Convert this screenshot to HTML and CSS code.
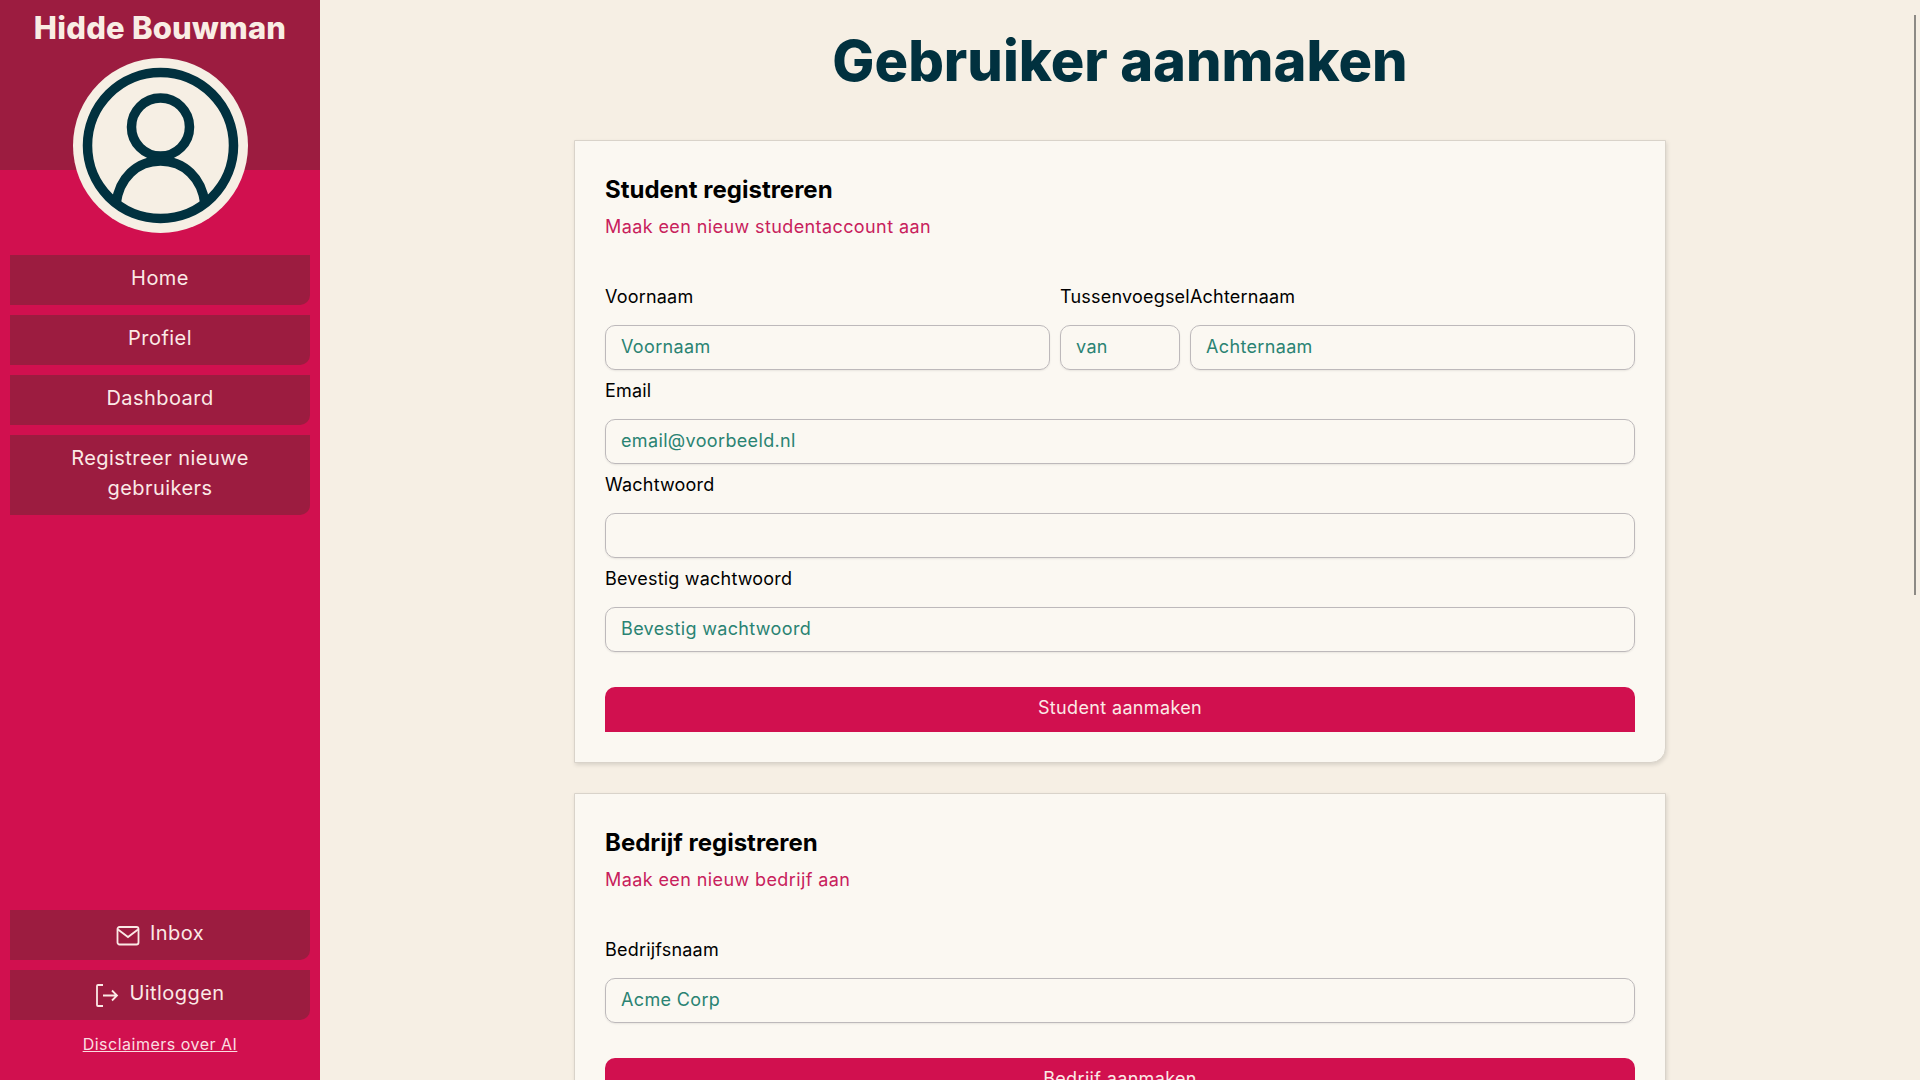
FILE: index.html
```html
<!DOCTYPE html>
<html lang="nl">
<head>
    <meta charset="UTF-8">
    <meta name="viewport" content="width=device-width, initial-scale=1.0">
    <title>Gebruiker aanmaken</title>
    <link rel="stylesheet" href="styles.css">
</head>
<body>
    <aside class="sidebar">
        <div class="sidebar-top">
            <h2 class="username">Hidde Bouwman</h2>
        </div>
        <div class="avatar">
            <svg viewBox="0 0 175 175" width="175" height="175">
                <circle cx="87.5" cy="87.5" r="87.5" fill="#f6efe4"/>
                <circle cx="87.5" cy="87.5" r="73" fill="none" stroke="#01313f" stroke-width="9.5"/>
                <circle cx="87.5" cy="69" r="29" fill="none" stroke="#01313f" stroke-width="9.5"/>
                <path d="M43 146 C46 120 64 103 87.5 103 C111 103 129 120 132 146" fill="none" stroke="#01313f" stroke-width="9.5"/>
            </svg>
        </div>
        <nav class="nav">
            <a class="nav-btn" href="#">Home</a>
            <a class="nav-btn" href="#">Profiel</a>
            <a class="nav-btn" href="#">Dashboard</a>
            <a class="nav-btn" href="#">Registreer nieuwe gebruikers</a>
        </nav>
        <div class="nav nav-bottom">
            <a class="nav-btn" href="#">
                <svg class="nav-icon" viewBox="0 0 24 24" width="24" height="24">
                    <rect x="1.5" y="3" width="21" height="17.5" rx="2" fill="none" stroke="currentColor" stroke-width="1.8"/>
                    <path d="M2 5.5 L12 13 L22 5.5" fill="none" stroke="currentColor" stroke-width="1.8"/>
                </svg>
                Inbox
            </a>
            <a class="nav-btn" href="#">
                <svg class="nav-icon" viewBox="0 0 24 24" width="24" height="24">
                    <path d="M8 1 H3 Q2 1 2 2 V21 Q2 22 3 22 H8" fill="none" stroke="currentColor" stroke-width="1.8"/>
                    <path d="M8 11.5 H22 M17 6.5 L22 11.5 L17 16.5" fill="none" stroke="currentColor" stroke-width="1.8"/>
                </svg>
                Uitloggen
            </a>
            <a class="disclaimer" href="#">Disclaimers over AI</a>
        </div>
    </aside>

    <main class="content">
        <h1 class="page-title">Gebruiker aanmaken</h1>

        <section class="card">
            <h3 class="card-title">Student registreren</h3>
            <p class="card-sub">Maak een nieuw studentaccount aan</p>
            <form class="form">
                <div class="name-row">
                    <div class="field">
                        <label>Voornaam</label>
                        <input type="text" placeholder="Voornaam">
                    </div>
                    <div class="field">
                        <label>Tussenvoegsel</label>
                        <input type="text" placeholder="van">
                    </div>
                    <div class="field">
                        <label>Achternaam</label>
                        <input type="text" placeholder="Achternaam">
                    </div>
                </div>
                <div class="field">
                    <label>Email</label>
                    <input type="email" placeholder="email@voorbeeld.nl">
                </div>
                <div class="field">
                    <label>Wachtwoord</label>
                    <input type="password">
                </div>
                <div class="field">
                    <label>Bevestig wachtwoord</label>
                    <input type="text" placeholder="Bevestig wachtwoord">
                </div>
                <button class="submit" type="button">Student aanmaken</button>
            </form>
        </section>

        <section class="card">
            <h3 class="card-title">Bedrijf registreren</h3>
            <p class="card-sub">Maak een nieuw bedrijf aan</p>
            <form class="form">
                <div class="field">
                    <label>Bedrijfsnaam</label>
                    <input type="text" placeholder="Acme Corp">
                </div>
                <button class="submit" type="button">Bedrijf aanmaken</button>
            </form>
        </section>
    </main>

    <div class="scroll-thumb"></div>
</body>
</html>
```

FILE: styles.css
```css
* {
    box-sizing: border-box;
}

html,
body {
    height: 100%;
    overflow: hidden;
}

body {
    margin: 0;
    display: flex;
    font-family: Inter, "Open Sans", sans-serif;
    background-color: #f6efe4;
    color: #000;
}

.sidebar {
    width: 320px;
    height: 1080px;
    flex-shrink: 0;
    display: flex;
    flex-direction: column;
    background-color: #d1104f;
    color: #fbe9e6;
}

.sidebar-top {
    height: 170px;
    margin-bottom: -112px;
    padding-top: 8px;
    background-color: #9c1c40;
    text-align: center;
}

.username {
    margin: 0;
    font-size: 31px;
    line-height: 40px;
    font-weight: 800;
    letter-spacing: 0.2px;
    color: #f9ede4;
}

.avatar {
    width: 175px;
    height: 175px;
    margin: 0 auto 22px;
}

.nav {
    display: flex;
    flex-direction: column;
    gap: 10px;
    padding: 0 10px;
}

.nav-bottom {
    margin-top: auto;
    padding-bottom: 24px;
}

.nav-btn {
    min-height: 50px;
    display: flex;
    align-items: center;
    justify-content: center;
    gap: 10px;
    padding: 0 40px 5px;
    background-color: #9c1c40;
    border-radius: 0 0 10px 0;
    color: #fbe9e6;
    font-size: 20px;
    line-height: 30px;
    letter-spacing: 0.45px;
    text-align: center;
    text-decoration: none;
}

.nav .nav-btn:nth-child(4) {
    height: 80px;
}

.nav-icon {
    flex-shrink: 0;
    margin-top: 7px;
}

.disclaimer {
    margin-top: 2px;
    color: #fbdde0;
    font-size: 16px;
    line-height: 24px;
    letter-spacing: 0.5px;
    text-align: center;
}

.content {
    flex: 1;
    display: flex;
    flex-direction: column;
    align-items: center;
}

.page-title {
    margin: 26px 0 44px;
    color: #01313f;
    font-size: 56px;
    line-height: 70px;
    font-weight: 800;
}

.card {
    width: 1092px;
    flex-shrink: 0;
    margin-bottom: 30px;
    padding: 31px 30px 30px;
    background-color: #fbf8f2;
    border: 1px solid #d9d3ca;
    border-radius: 0 0 15px 0;
    box-shadow: 1px 2px 4px rgba(0, 0, 0, 0.12);
}

.card-title {
    margin: 0;
    font-size: 24px;
    line-height: 36px;
    font-weight: 700;
}

.card-sub {
    margin: 5px 0 0;
    color: #c8215c;
    font-size: 18px;
    line-height: 27px;
    letter-spacing: 0.4px;
}

.form {
    margin-top: 36px;
}

.name-row {
    display: grid;
    grid-template-columns: 1fr 120px 1fr;
    gap: 10px;
}

.field {
    display: flex;
    flex-direction: column;
}

.field label {
    height: 24px;
    margin-top: 9px;
    margin-bottom: 16px;
    font-size: 18px;
    line-height: 24px;
    letter-spacing: 0.2px;
    white-space: nowrap;
}

.field input {
    width: 100%;
    height: 45px;
    padding: 0 15px 2px;
    background: transparent;
    border: 1px solid #bdb9bb;
    border-radius: 10px;
    box-shadow: 0 1px 2px rgba(0, 0, 0, 0.08);
    font-family: inherit;
    font-size: 18px;
    letter-spacing: 0.35px;
}

.field input::placeholder {
    color: #2a8373;
    opacity: 1;
}

.submit {
    width: 100%;
    height: 45px;
    margin-top: 35px;
    padding: 0 0 4px;
    display: block;
    background-color: #d1104f;
    border: none;
    border-radius: 10px 10px 0 0;
    color: #fbe9e6;
    font-family: inherit;
    font-size: 18px;
    letter-spacing: 0.35px;
}

.scroll-thumb {
    position: absolute;
    top: 15px;
    right: 4px;
    width: 2px;
    height: 580px;
    background-color: #8d8a85;
}
```
